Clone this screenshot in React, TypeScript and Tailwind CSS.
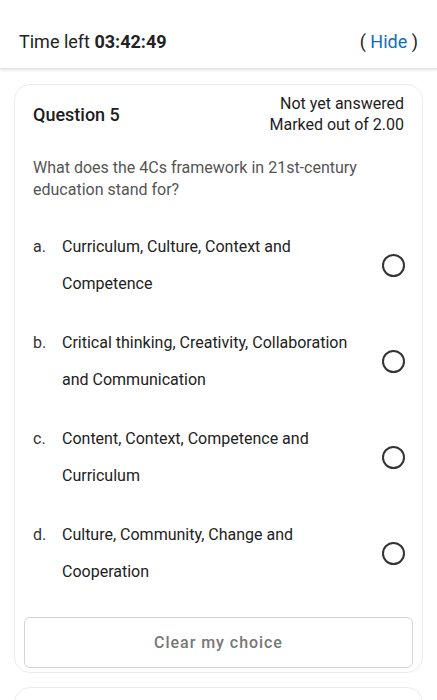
const options = [
  { letter: 'a.', lines: ['Curriculum, Culture, Context and', 'Competence'] },
  { letter: 'b.', lines: ['Critical thinking, Creativity, Collaboration', 'and Communication'] },
  { letter: 'c.', lines: ['Content, Context, Competence and', 'Curriculum'] },
  { letter: 'd.', lines: ['Culture, Community, Change and', 'Cooperation'] },
]

export default function App() {
  return (
    <div className="w-[437px] h-[700px] overflow-hidden bg-white font-['Roboto',sans-serif] text-[#222]">
      <div className="h-[69px] pt-[14px] flex items-center justify-between px-[19px] bg-white shadow-[0_1px_3px_rgba(0,0,0,0.12)] border-b border-[#e4e4e4]">
        <div className="text-[18px] text-[#222]">
          Time left <span className="font-bold">03:42:49</span>
        </div>
        <div className="text-[18px] text-[#222]">
          ( <span className="text-[#0f6cbf]">Hide</span> )
        </div>
      </div>

      <div className="px-[14px] pt-[15px]">
        <div className="border border-[#ececec] rounded-[16px] px-[18px] pt-[8px] pb-[4px]">
          <div className="flex justify-between items-start">
            <div className="text-[18px] font-medium text-[#1d1d1d] pt-[8px]">Question 5</div>
            <div className="text-right text-[16px] leading-[21px] text-[#1d1d1d]">
              <div>Not yet answered</div>
              <div>Marked out of 2.00</div>
            </div>
          </div>

          <div className="mt-[22px] text-[16px] leading-[22px] text-[#555]">
            What does the 4Cs framework in 21st-century
            <br />
            education stand for?
          </div>

          <div className="mt-[27px] flex flex-col gap-[22px]">
            {options.map((o) => (
              <div key={o.letter} className="flex items-center">
                <div className="w-[29px] text-[16px] leading-[37px] self-start text-[#333]">{o.letter}</div>
                <div className="flex-grow text-[16px] leading-[37px] text-[#222]">
                  {o.lines.map((l) => (
                    <div key={l}>{l}</div>
                  ))}
                </div>
                <div className="w-[23px] h-[23px] rounded-full border-2 border-[#333] -mr-[1px]" />
              </div>
            ))}
          </div>

          <button className="mt-[27px] -mx-[9px] w-[calc(100%+18px)] h-[51px] border border-[#d4d4d4] rounded-[6px] text-[16px] font-medium tracking-[0.06em] text-[#777] bg-white">
            Clear my choice
          </button>
        </div>

        <div className="mt-[14px] h-[40px] border border-[#ececec] rounded-t-[16px]" />
      </div>
    </div>
  )
}
